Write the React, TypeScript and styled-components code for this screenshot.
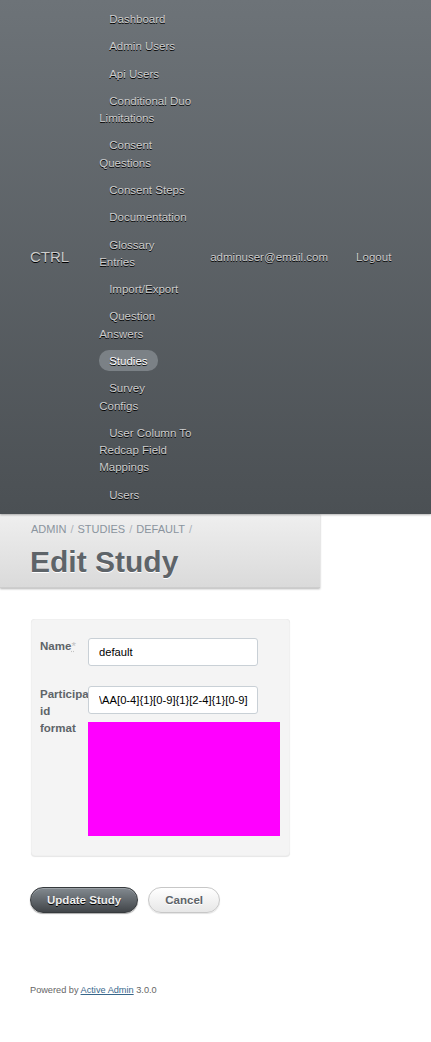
import React from "react";
import styled, { createGlobalStyle } from "styled-components";

const Global = createGlobalStyle`
  html, body { margin: 0; padding: 0; background: #fff; }
  body {
    font-family: "Liberation Sans", Arial, sans-serif;
    font-size: 11.52px;
    line-height: 1.5;
    color: #323537;
  }
  * { box-sizing: border-box; }
`;

const Header = styled.header`
  display: flex;
  align-items: center;
  padding: 11px 30px 10px;
  background: linear-gradient(180deg, #6d7378 0%, #4b5054 100%);
  box-shadow: 0 1px 2px rgba(0, 0, 0, 0.3);
  color: #cdcdcd;
  text-shadow: #000 0 1px 0;
  position: relative;
  z-index: 2;
`;

const SiteTitle = styled.h1`
  margin: 0 30px 0 0;
  font-size: 15px;
  font-weight: normal;
  line-height: 1.2;
  color: #cdcdcd;
`;

const Tabs = styled.ul`
  list-style: none;
  display: flex;
  flex-direction: column;
  gap: 10px;
  margin: 0;
  padding: 0;
  flex: 0 0 98px;
  width: 98px;
`;

const Tab = styled.li`
  display: block;
  line-height: 17.28px;
`;

const TabLink = styled.a<{ $current?: boolean }>`
  display: inline;
  padding: 5px 10px 4px;
  border-radius: 10px;
  text-decoration: none;
  color: ${(p) => (p.$current ? "#fff" : "#cdcdcd")};
  background: ${(p) => (p.$current ? "#7b8186" : "transparent")};
`;

const UtilityNav = styled.ul`
  list-style: none;
  display: flex;
  gap: 8px;
  margin: 0 0 0 3px;
  padding: 0;
  white-space: nowrap;
`;

const UtilityItem = styled.li`
  padding: 0 10px;
  line-height: 17.28px;
  color: #cdcdcd;
`;

const TitleBar = styled.div`
  width: 320px;
  padding: 8px 30px 5px;
  background: linear-gradient(180deg, #efefef 0%, #dadada 100%);
  border-bottom: 1px solid #cdcdcd;
  box-shadow: 0 1px 2px rgba(0, 0, 0, 0.3);
  position: relative;
  z-index: 1;
`;

const Breadcrumb = styled.div`
  font-size: 11px;
  line-height: 14px;
  color: #8a949e;
  text-transform: uppercase;
  padding-left: 1px;
`;

const Sep = styled.span`
  margin: 0 4px;
  color: #aab2b9;
`;

const PageTitle = styled.h2`
  margin: 6px 0 0;
  font-size: 30px;
  line-height: 40px;
  font-weight: bold;
  color: #5e6469;
  text-shadow: #fff 0 1px 0;
`;

const Main = styled.main`
  padding: 31px 30px 0;
`;

const Fieldset = styled.fieldset`
  width: 259px;
  margin: 0 0 0 1px;
  padding: 9px 0 10px;
  border: none;
  border-radius: 4px;
  background: #f4f4f4;
  box-shadow: inset 0 0 1px #ccc, 0 1px 1px #e6e6e6;
`;

const Row = styled.div`
  display: flex;
  align-items: flex-start;
  padding: 10px 0 10px 9px;
`;

const Label = styled.label`
  flex: 0 0 48px;
  width: 48px;
  overflow: hidden;
  font-weight: bold;
  color: #5e6469;
  line-height: 17.28px;
`;

const Req = styled.abbr`
  color: #c2c2c2;
  font-weight: normal;
  text-decoration: underline dotted;
`;

const FieldCol = styled.div`
  display: flex;
  flex-direction: column;
  gap: 8px;
`;

const Input = styled.input<{ $w: number }>`
  width: ${(p) => p.$w}px;
  height: 28px;
  padding: 0 9px 0 10px;
  border: 1px solid #c9d0d6;
  border-radius: 3px;
  background: #fff;
  font-family: "Liberation Sans", Arial, sans-serif;
  font-size: 11.2px;
  color: #000;
  outline: none;
`;

const Preview = styled.div`
  width: 192px;
  height: 114px;
  background: #ff00ff;
`;

const Actions = styled.div`
  display: flex;
  gap: 10px;
  margin-top: 31px;
`;

const Button = styled.button<{ $primary?: boolean }>`
  height: 26px;
  padding: 0 16px;
  border-radius: 200px;
  font-family: "Liberation Sans", Arial, sans-serif;
  font-size: 11.52px;
  font-weight: bold;
  cursor: pointer;
  ${(p) =>
    p.$primary
      ? `
    color: #efefef;
    background: linear-gradient(180deg, #838a90 0%, #414549 100%);
    border: 1px solid #363a3d;
    text-shadow: #000 0 1px 0;
    box-shadow: 0 1px 1px #aaa, inset 0 1px 0 #9ca2a7;
  `
      : `
    color: #5e6469;
    background: linear-gradient(180deg, #ffffff 0%, #e7e7e7 100%);
    border: 1px solid #c7c7c7;
    text-shadow: #fff 0 1px 0;
    box-shadow: 0 1px 1px #e4e4e4;
  `}
`;

const Footer = styled.footer`
  padding: 71px 30px 30px;
  font-size: 9.2px;
  color: #666;
`;

const FooterLink = styled.a`
  color: #38678b;
  text-decoration: underline;
`;

const tabs: { label: string; current?: boolean }[] = [
  { label: "Dashboard" },
  { label: "Admin Users" },
  { label: "Api Users" },
  { label: "Conditional Duo Limitations" },
  { label: "Consent Questions" },
  { label: "Consent Steps" },
  { label: "Documentation" },
  { label: "Glossary Entries" },
  { label: "Import/Export" },
  { label: "Question Answers" },
  { label: "Studies", current: true },
  { label: "Survey Configs" },
  { label: "User Column To Redcap Field Mappings" },
  { label: "Users" },
];

export default function App() {
  return (
    <>
      <Global />
      <Header>
        <SiteTitle>CTRL</SiteTitle>
        <Tabs>
          {tabs.map((t) => (
            <Tab key={t.label}>
              <TabLink href="#" $current={t.current}>
                {t.label}
              </TabLink>
            </Tab>
          ))}
        </Tabs>
        <UtilityNav>
          <UtilityItem>adminuser@email.com</UtilityItem>
          <UtilityItem>Logout</UtilityItem>
        </UtilityNav>
      </Header>
      <TitleBar>
        <Breadcrumb>
          Admin<Sep>/</Sep>Studies<Sep>/</Sep>default<Sep>/</Sep>
        </Breadcrumb>
        <PageTitle>Edit Study</PageTitle>
      </TitleBar>
      <Main>
        <Fieldset>
          <Row>
            <Label>
              Name<Req title="required">*</Req>
            </Label>
            <FieldCol>
              <Input $w={170} readOnly defaultValue="default" />
            </FieldCol>
          </Row>
          <Row>
            <Label>Participant id format</Label>
            <FieldCol>
              <Input
                $w={170}
                readOnly
                defaultValue="\AA[0-4]{1}[0-9]{1}[2-4]{1}[0-9]{3}\z"
              />
              <Preview />
            </FieldCol>
          </Row>
        </Fieldset>
        <Actions>
          <Button $primary>Update Study</Button>
          <Button>Cancel</Button>
        </Actions>
      </Main>
      <Footer>
        Powered by <FooterLink href="#">Active Admin</FooterLink> 3.0.0
      </Footer>
    </>
  );
}
